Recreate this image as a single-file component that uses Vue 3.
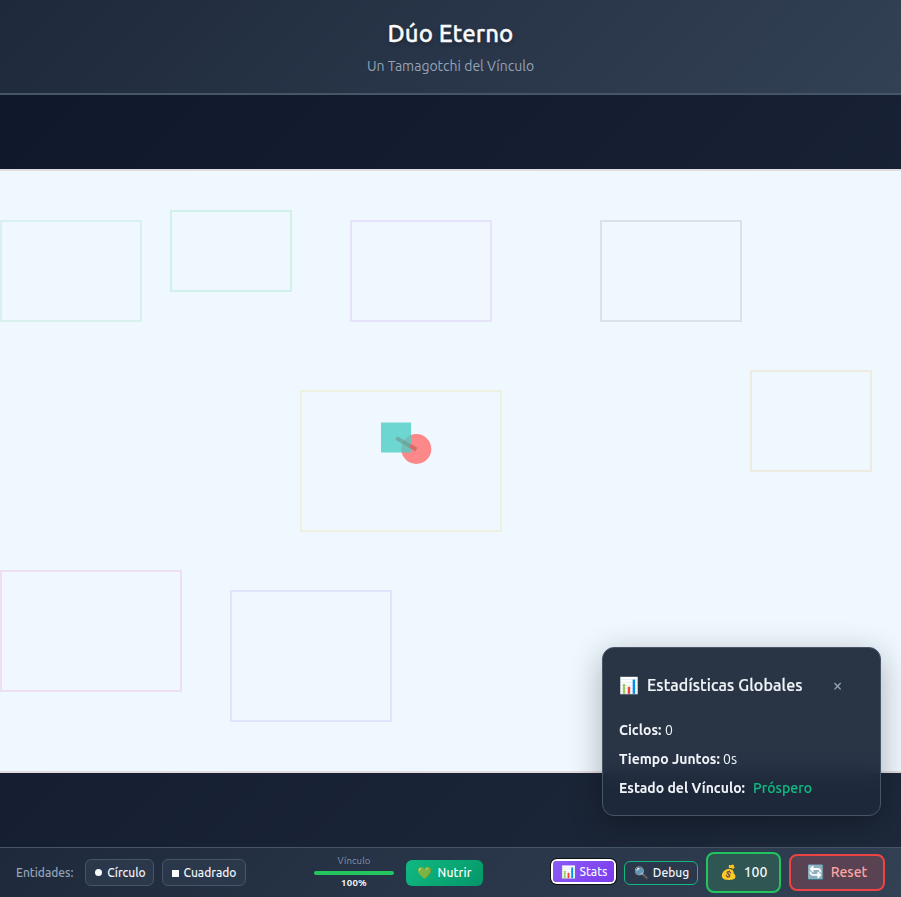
<script setup>
const zones = [
  { x: 0, y: 50, w: 142, h: 102, c: '#d8f1ed', f: '#eff8ff' },
  { x: 170, y: 40, w: 122, h: 82, c: '#d1f1e8', f: '#eff8ff' },
  { x: 350, y: 50, w: 142, h: 102, c: '#e5e2f9', f: '#f0f7ff' },
  { x: 600, y: 50, w: 142, h: 102, c: '#dae1e9', f: '#f0f7ff' },
  { x: 300, y: 220, w: 202, h: 142, c: '#eef1e0', f: '#f0f8ff' },
  { x: 750, y: 200, w: 122, h: 102, c: '#f0ebdf', f: '#eff8ff' },
  { x: 0, y: 400, w: 182, h: 122, c: '#eedff0', f: '#f0f7ff' },
  { x: 230, y: 420, w: 162, h: 132, c: '#dfe3fb', f: '#f0f7ff' }
]
const bond = 100
</script>

<template>
  <div class="app">
    <header class="top">
      <h1>Dúo Eterno</h1>
      <p>Un Tamagotchi del Vínculo</p>
    </header>
    <main class="stage">
      <svg class="world" viewBox="0 0 901 600" width="901" height="600">
        <rect v-for="(z, i) in zones" :key="i" :x="z.x + 1" :y="z.y" :width="z.w - 2" :height="z.h - 2" :fill="z.f" :stroke="z.c" stroke-width="2" />
        <circle cx="416.3" cy="278" r="15" fill="#ff6b6b" fill-opacity=".8" />
        <rect x="381" y="251.5" width="30" height="30" fill="#4ecdc4" fill-opacity=".8" />
        <path d="M396.3 267 416.3 278.5" stroke="#6d9c95" stroke-opacity=".7" stroke-width="4" />
        <path d="M410 274.8 416.3 278.5" stroke="#ff5555" stroke-opacity=".7" stroke-width="4" />
      </svg>
    </main>
    <footer class="bar">
      <div class="group left">
        <span class="label">Entidades:</span>
        <button class="btn circle"><i class="dot"></i><span>Círculo</span></button>
        <button class="btn square"><i class="sq"></i><span>Cuadrado</span></button>
      </div>
      <div class="group mid">
        <div class="bond">
          <span class="bond-label">Vínculo</span>
          <div class="track"><div class="fill" :style="{ width: bond + '%' }"></div></div>
          <span class="bond-value">{{ bond }}%</span>
        </div>
        <button class="btn feed"><span class="emo">💚</span><span>Nutrir</span></button>
      </div>
      <div class="group right">
        <button class="btn stats"><span class="emo">📊</span><span>Stats</span></button>
        <button class="btn debug"><span class="emo">🔍</span><span>Debug</span></button>
        <button class="btn money"><span class="emo">💰</span><span>100</span></button>
        <button class="btn reset"><span class="emo">🔄</span><span>Reset</span></button>
      </div>
    </footer>
    <aside class="panel">
      <div class="panel-head">
        <span class="emo">📊</span>
        <h2>Estadísticas Globales</h2>
        <button class="close">×</button>
      </div>
      <div class="row"><b class="k1">Ciclos:</b><span>0</span></div>
      <div class="row"><b class="k2">Tiempo Juntos:</b><span>0s</span></div>
      <div class="row"><b class="k3">Estado del Vínculo:</b><span class="good">Próspero</span></div>
    </aside>
  </div>
</template>

<style>
body { margin: 0; overflow: hidden; }
</style>

<style scoped>
* { box-sizing: border-box; }
.app {
  position: relative; width: 901px; height: 897px; display: flex; flex-direction: column;
  background: linear-gradient(135deg, #0f172a 0%, #1e293b 100%);
  font-family: Ubuntu, "Noto Sans", sans-serif; color: #f1f5f9; overflow: hidden;
}
.top {
  height: 95px; flex: none; border-bottom: 2px solid #475569; text-align: center;
  background: linear-gradient(135deg, #1e293b 0%, #334155 100%);
}
h1 { margin: 16px 0 0; font-size: 24px; line-height: 35px; font-weight: 560; letter-spacing: .05px; -webkit-text-stroke: .3px #f8fafc; color: #f8fafc; text-shadow: 0 2px 4px rgba(0,0,0,.3); }
.top p { margin: 5px 0 0; font-size: 14px; line-height: 21px; font-weight: 400; color: #94a3b8; }
.stage { flex: 1; display: flex; align-items: center; }
.world { display: block; box-sizing: content-box; background: #f0f8ff; border: solid #e0dcdf; border-width: 2px 0; }
.bar {
  height: 50px; flex: none; display: flex; justify-content: space-between; align-items: center;
  padding: 0 16px; border-top: 1px solid #475569;
  background: linear-gradient(135deg, #1e293b 0%, #334155 100%);
}
.group { display: flex; align-items: center; gap: 8px; }
.label { width: 61px; font-size: 12px; font-weight: 500; color: #94a3b8; white-space: nowrap; }
.btn {
  display: flex; align-items: center; justify-content: center; gap: 5px; padding: 0; font-family: inherit;
  font-size: 12px; font-weight: 500; color: #f1f5f9; white-space: nowrap; line-height: 16px;
  background: #2b384b; border: 1px solid #475569; border-radius: 6px; height: 27px;
}
.circle { width: 69px; padding-left: 2px; }
.square { width: 84px; }
.dot { width: 7px; height: 7px; border-radius: 50%; background: #f8fafc; }
.sq { width: 7px; height: 7px; background: #f8fafc; margin-top: 1px; }
.mid { gap: 12px; }
.bond { width: 80px; display: flex; flex-direction: column; align-items: center; margin-top: -2px; }
.bond-label { font-size: 9.6px; line-height: 12px; font-weight: 400; letter-spacing: .1px; color: #8795a9; margin-left: 1px; }
.track { width: 80px; height: 4px; margin: 4px 0 2px; border-radius: 2px; background: #334155; }
.fill { height: 4px; border-radius: 2px; background: #22c55e; }
.bond-value { font-size: 9.6px; line-height: 12px; font-weight: 600; letter-spacing: .3px; margin-left: 1px; }
.feed { width: 77px; height: 26px; border: 0; background: linear-gradient(135deg, #10b981, #059669); color: #fff; letter-spacing: .15px; padding-left: 1px; }
.stats { width: 61px; height: 21px; border: 0; margin: 0 2px 2px 3px; background: linear-gradient(135deg, #8b5cf6, #7c3aed); box-shadow: 0 0 0 2px #fff, 0 0 0 3px #101010; border-radius: 4px; gap: 4px; padding-left: 1px; }
.debug { width: 74px; height: 24px; border-color: #10b981; gap: 4px; padding-left: 1px; }
.money { width: 75px; height: 41px; border: 2px solid #22c55e; border-radius: 8px; background: #2f5653; font-size: 14px; gap: 7px; }
.money span, .reset span { margin-top: -2px; }
.reset { width: 96px; height: 37px; border: 2px solid #ef4444; border-radius: 8px; background: #594251; color: #fca5a5; font-size: 14px; font-weight: 500; gap: 7px; }
.panel {
  position: absolute; left: 602px; top: 647px; width: 279px; height: 169px; padding: 23px 16px 0;
  border: 1px solid #475569; border-radius: 12px; background: rgba(30,41,59,.95);
  backdrop-filter: blur(10px); box-shadow: 0 8px 32px rgba(0,0,0,.3);
}
.panel-head { display: flex; align-items: center; height: 28px; margin-bottom: 16px; }
.panel-head .emo { width: 28px; font-size: 16px; }
h2 { margin: 0; width: 185px; font-size: 16px; font-weight: 500; letter-spacing: .13px; -webkit-text-stroke: .2px #f1f5f9; white-space: nowrap; }
.close { border: 0; padding: 0 0 0 1px; background: none; color: #94a3b8; font: 500 16px "Noto Sans", sans-serif; line-height: 24px; margin-top: 2px; }
.row { display: flex; height: 29px; align-items: center; font-size: 14px; font-weight: 400; white-space: nowrap; }
.row b { font-weight: 600; }
.k1 { width: 46px; } .k2 { width: 104px; } .k3 { width: 134px; }
.good { color: #10b981; font-weight: 500; letter-spacing: .08px; -webkit-text-stroke: .15px #10b981; }
</style>
